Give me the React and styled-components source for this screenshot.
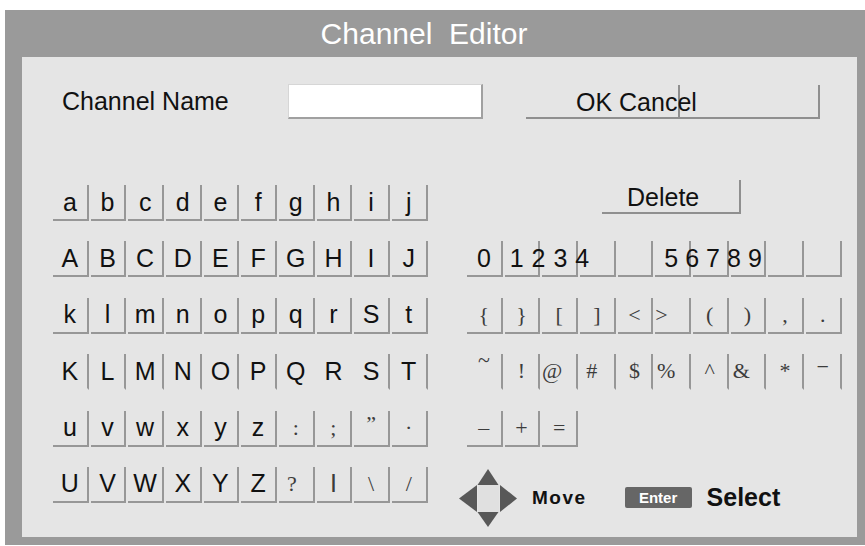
import React from "react";
import styled, { createGlobalStyle } from "styled-components";

const GlobalStyle = createGlobalStyle`
  body {
    margin: 0;
    background: #ffffff;
    font-family: "Liberation Sans", Arial, sans-serif;
  }
`;

const SANS = '"Liberation Sans", Arial, sans-serif';
const SERIF = '"Liberation Serif", "Times New Roman", serif';

// key specs: a plain string, or { t, serif, dx, dy, left, pad, ls, noRight }
const leftRows = [
    { keys: "abcdefghij".split("") },
    { keys: "ABCDEFGHIJ".split("") },
    { keys: "klmnopqrSt".split("") },
    {
        flat: true,
        keys: ["K", "L", "M", "N", "O", "P", { t: "Q", noRight: true }, { t: "R", noRight: true }, "S", "T"],
    },
    {
        keys: ["u", "v", "w", "x", "y", "z",
            { t: ":", serif: true }, { t: ";", serif: true }, { t: "\u201d", serif: true, dy: -4 }, { t: "\u00b7", serif: true }],
    },
    {
        keys: ["U", "V", "W", "X", "Y", "Z",
            { t: "?", serif: true, dx: -4 }, { t: "I", thin: true }, { t: "\\", serif: true }, { t: "/", serif: true }],
    },
];

const rightRows = [
    {
        keys: ["0", { t: "1234", left: true, pad: 5, ls: 8 }, "", "", "",
            { t: "56789", left: true, pad: 9, ls: 7 }, "", "", "", ""],
    },
    {
        keys: ["{", "}", "[", "]", "<", { t: ">", left: true, pad: 0 }, "(", ")", ",", "."].map((t) =>
            typeof t === "string" ? { t, serif: true } : { ...t, serif: true }
        ),
    },
    {
        flat: true,
        keys: [
            { t: "~", serif: true, dy: -11 },
            { t: "!", serif: true },
            { t: "@", serif: true, dx: -7 },
            { t: "#", serif: true, dx: -5 },
            { t: "$", serif: true },
            { t: "%", serif: true, dx: -6 },
            { t: "^", serif: true },
            { t: "&", serif: true, dx: -6 },
            { t: "*", serif: true },
            { t: "\u2212", serif: true, dy: -4 },
        ],
    },
    {
        keys: [{ t: "_", serif: true, dy: -8 }, { t: "+", serif: true }, { t: "=", serif: true }],
    },
];

const ChannelEditor = () => {
    const renderRow = (row, i) => (
        <KeyRow key={i}>
            {row.keys.map((k, j) => {
                const spec = typeof k === "string" ? { t: k } : k;
                return (
                    <Key
                        key={j}
                        $flat={row.flat}
                        $noRight={spec.noRight}
                        $left={spec.left}
                        $pad={spec.pad}
                    >
                        <KeyLabel
                            $serif={spec.serif}
                            $thin={spec.thin}
                            $ls={spec.ls}
                            $dx={spec.dx}
                            $dy={spec.dy}
                        >
                            {spec.t}
                        </KeyLabel>
                    </Key>
                );
            })}
        </KeyRow>
    );

    return (
        <Frame>
            <TitleBar>Channel  Editor</TitleBar>
            <Panel>
                <NameRow>
                    <NameLabel>Channel Name</NameLabel>
                    <NameInput />
                    <ActionButton $width={154} $pad={50}>OK Cancel</ActionButton>
                    <ActionButton $width={140} $pad={0}></ActionButton>
                </NameRow>
                <KeyArea>
                    {leftRows.map(renderRow)}
                    <DeleteRow>
                        <ActionButton $width={139} $pad={25}>Delete</ActionButton>
                    </DeleteRow>
                    {rightRows.map(renderRow)}
                    <Legend>
                        <svg width="58" height="58" viewBox="0 0 58 58">
                            <rect x="19" y="16" width="21" height="27" fill="#e0e0e0" />
                            <polygon points="29,0 18.5,16 39.5,16" fill="#585858" />
                            <polygon points="0,29.5 18,16 18,43" fill="#585858" />
                            <polygon points="58,29.5 41,16 41,43" fill="#585858" />
                            <polygon points="29,58 18.5,43 39.5,43" fill="#585858" />
                        </svg>
                        <MoveText>Move</MoveText>
                        <EnterBadge>Enter</EnterBadge>
                        <SelectText>Select</SelectText>
                    </Legend>
                </KeyArea>
            </Panel>
        </Frame>
    );
};

const Frame = styled.div`
    margin: 10px 0 0 5px;
    width: 860px;
    height: 535px;
    box-sizing: border-box;
    background: #9a9a9a;
    padding: 0 8px 8px 0;
    display: flex;
    flex-direction: column;
`;

const TitleBar = styled.div`
    height: 47px;
    flex: none;
    display: flex;
    align-items: center;
    justify-content: center;
    padding-right: 14px;
    color: #ffffff;
    font-family: ${SANS};
    font-size: 30px;
    white-space: pre;
`;

const Panel = styled.div`
    flex: 1;
    margin-left: 17px;
    background: #e5e5e5;
    display: flex;
    flex-direction: column;
`;

const NameRow = styled.div`
    display: flex;
    align-items: center;
    height: 35px;
    margin-top: 27px;
    padding-left: 40px;
`;

const NameLabel = styled.div`
    width: 226px;
    font-family: ${SANS};
    font-size: 25px;
    color: #111;
`;

const NameInput = styled.div`
    width: 195px;
    height: 35px;
    box-sizing: border-box;
    background: #ffffff;
    border-top: 1px solid #d6d6d6;
    border-left: 1px solid #d6d6d6;
    border-right: 2px solid #a0a0a0;
    border-bottom: 2px solid #a0a0a0;
    margin-right: 43px;
`;

const ActionButton = styled.div`
    width: ${(p) => p.$width}px;
    height: 34px;
    box-sizing: border-box;
    display: flex;
    align-items: center;
    padding-left: ${(p) => p.$pad || 0}px;
    padding-top: 3px;
    border-right: 2px solid #8f8f8f;
    border-bottom: 2px solid #8f8f8f;
    font-family: ${SANS};
    font-size: 25px;
    color: #111;
    white-space: nowrap;
`;

const KeyArea = styled.div`
    display: grid;
    grid-template-columns: 375px 375px;
    grid-template-rows: repeat(6, 36px);
    grid-auto-flow: column;
    column-gap: 39px;
    row-gap: 20.4px;
    margin-top: 66px;
    padding-left: 31px;
`;

const KeyRow = styled.div`
    display: grid;
    grid-template-columns: repeat(10, 35.67px);
    column-gap: 2px;
    height: 36px;
`;

const Key = styled.div`
    display: flex;
    align-items: center;
    justify-content: ${(p) => (p.$left ? "flex-start" : "center")};
    padding-left: ${(p) => p.$pad || 0}px;
    height: 36px;
    box-sizing: border-box;
    border-right: 2px solid ${(p) => (p.$noRight ? "transparent" : "#979797")};
    border-bottom: 2px solid ${(p) => (p.$flat ? "transparent" : "#979797")};
    white-space: nowrap;
`;

const KeyLabel = styled.span`
    font-family: ${(p) => (p.$serif ? SERIF : SANS)};
    font-size: ${(p) => (p.$serif ? 22 : 25)}px;
    color: ${(p) => (p.$serif || p.$thin ? "#3c3c3c" : "#111")};
    letter-spacing: ${(p) => p.$ls || 0}px;
    transform: translate(${(p) => p.$dx || 0}px, ${(p) => p.$dy || 0}px);
`;

const DeleteRow = styled.div`
    display: flex;
    align-items: flex-start;
    padding-left: 135px;
    margin-top: -5px;
`;

const Legend = styled.div`
    display: flex;
    align-items: center;
    height: 58px;
    margin: 2px 0 0 -8px;
`;

const MoveText = styled.span`
    margin-left: 15px;
    font-family: ${SANS};
    font-weight: bold;
    font-size: 19px;
    letter-spacing: 1.5px;
    color: #111;
`;

const EnterBadge = styled.span`
    margin-left: 38px;
    width: 67px;
    height: 21px;
    border-radius: 2px;
    background: #666666;
    color: #ffffff;
    font-family: ${SANS};
    font-weight: bold;
    font-size: 15px;
    display: flex;
    align-items: center;
    justify-content: center;
`;

const SelectText = styled.span`
    margin-left: 15px;
    font-family: ${SANS};
    font-weight: bold;
    font-size: 25px;
    color: #111;
`;

export default function App() {
    return (
        <>
            <GlobalStyle />
            <ChannelEditor />
        </>
    );
}
